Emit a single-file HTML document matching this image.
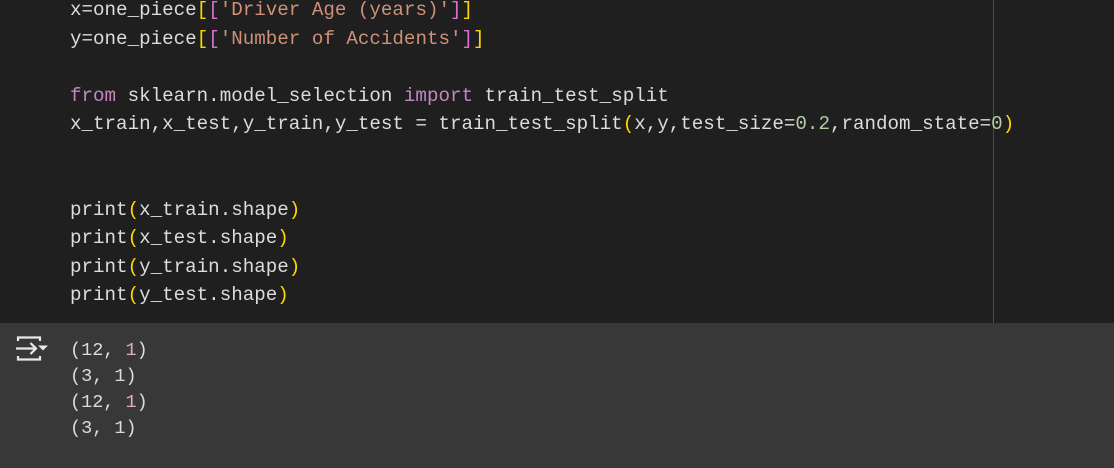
<html><head><style>
body{margin:0;width:1114px;height:468px;overflow:hidden;background:#383838;font-family:"Liberation Mono",monospace}
.code{position:absolute;left:0;top:0;width:1114px;height:323px;background:#1f1f1f}
.vl{position:absolute;left:993px;top:0;width:1px;height:323px;background:#4a4a4a}
pre{margin:0;font-family:inherit}
.c{position:absolute;left:70px;top:-4px;font-size:19.2px;line-height:28.5px;color:#dcdcdc}
.o{position:absolute;left:70px;top:338px;font-size:18.5px;line-height:26px;color:#dcdcdc}
.s{color:#ce9178}.k{color:#c586c0}.y{color:#ffd700}.p{color:#da70d6}.n{color:#b5cea8}.r{color:#e0b0b0}
</style></head><body>
<div class="code"></div><div class="vl"></div>
<pre class="c">x=one_piece<span class="y">[</span><span class="p">[</span><span class="s">'Driver Age (years)'</span><span class="p">]</span><span class="y">]</span>
y=one_piece<span class="y">[</span><span class="p">[</span><span class="s">'Number of Accidents'</span><span class="p">]</span><span class="y">]</span>

<span class="k">from</span> sklearn.model_selection <span class="k">import</span> train_test_split
x_train,x_test,y_train,y_test = train_test_split<span class="y">(</span>x,y,test_size=<span class="n">0.2</span>,random_state=<span class="n">0</span><span class="y">)</span>


print<span class="y">(</span>x_train.shape<span class="y">)</span>
print<span class="y">(</span>x_test.shape<span class="y">)</span>
print<span class="y">(</span>y_train.shape<span class="y">)</span>
print<span class="y">(</span>y_test.shape<span class="y">)</span></pre>
<svg style="position:absolute;left:14px;top:335px" width="36" height="28" viewBox="0 0 36 28">
<path d="M4 6V2.5h22V6M4 21v3.5h22V21" fill="none" stroke="#e8e8e8" stroke-width="2.2"/>
<path d="M2 13.5h20M16.5 8l5.5 5.5-5.5 5.5" fill="none" stroke="#e8e8e8" stroke-width="2.2"/>
<path d="M24 10.5h10l-5 5z" fill="#e8e8e8"/></svg>
<pre class="o">(12, <span class="r">1</span>)
(3, 1)
(12, <span class="r">1</span>)
(3, 1)</pre>
</body></html>
